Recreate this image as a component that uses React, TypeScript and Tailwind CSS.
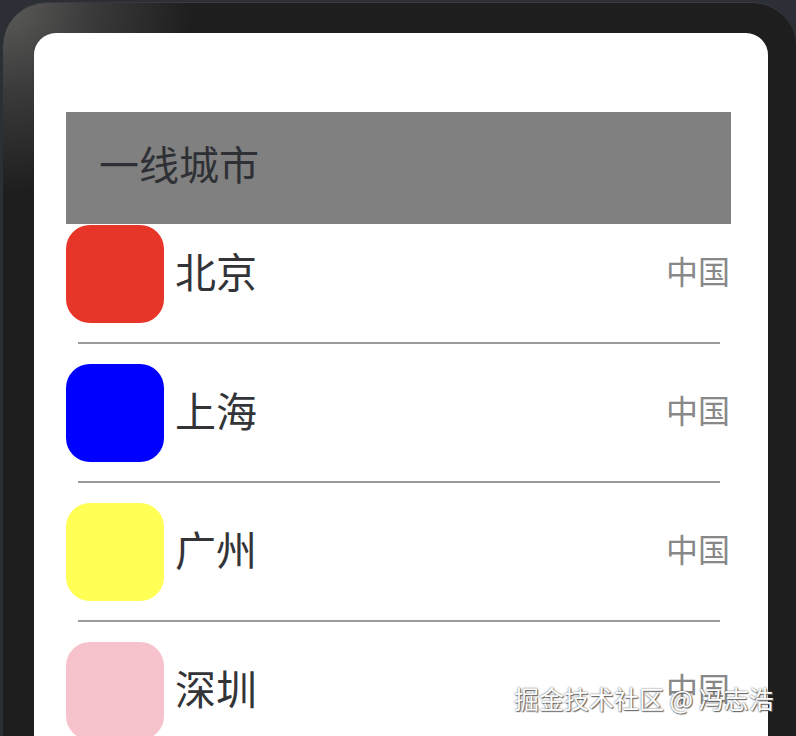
import React from "react";

type City = {
  name: string;
  country: string;
  color: string;
};

const cities: City[] = [
  { name: "北京", country: "中国", color: "bg-[#e8352a]" },
  { name: "上海", country: "中国", color: "bg-[#0000ff]" },
  { name: "广州", country: "中国", color: "bg-[#ffff55]" },
  { name: "深圳", country: "中国", color: "bg-[#f6c2cc]" },
];

const CityRow = ({ city, last }: { city: City; last: boolean }) => (
  <div>
    <div className="flex items-center h-[98px]">
      <div className={`w-[98px] h-[98px] rounded-[24px] shrink-0 ${city.color}`} />
      <div className="ml-[11px] pb-[7px] text-[41px] leading-none text-[#333438]">{city.name}</div>
      <div className="ml-auto mr-[1px] pb-[8px] text-[32px] leading-none text-[#888888]">{city.country}</div>
    </div>
    {!last && <div className="mt-[19px] mb-[20px] ml-[12px] mr-[11px] h-[2px] bg-[#9a9a9a]" />}
  </div>
);

export default function App() {
  return (
    <div
      className="relative w-[796px] h-[736px] overflow-hidden bg-[#2c2f35] pt-[2px] pl-[3px]"
      style={{ fontFamily: '"Noto Sans CJK SC", "Noto Sans", sans-serif' }}
    >
      {/* phone frame */}
      <div className="h-[760px] rounded-t-[44px] bg-[#1e1e1f] bg-[radial-gradient(circle_at_0_0,#5c5c5a_0px,#3a3a3a_90px,#1e1e1f_190px)] pt-[30px] pl-[31px] pr-[28px] border-t border-[#3a3b3e]">
        {/* screen */}
        <div className="h-[740px] rounded-t-[22px] bg-white pt-[79px] pl-[32px] pr-[37px]">
          <div className="h-[112px] bg-[#808080] flex items-center pl-[33px] pb-[10px]">
            <span className="text-[40px] leading-none text-[#2e3035]">一线城市</span>
          </div>
          <div className="pt-[1px]">
            {cities.map((city, i) => (
              <CityRow key={city.name} city={city} last={i === cities.length - 1} />
            ))}
          </div>
        </div>
      </div>

      {/* watermark */}
      <div className="absolute left-[514px] top-[686px] text-[25px] leading-none text-white [text-shadow:0_0_2px_#555,1px_1px_1px_#666]">
        掘金技术社区 @ 冯志浩
      </div>
    </div>
  );
}
